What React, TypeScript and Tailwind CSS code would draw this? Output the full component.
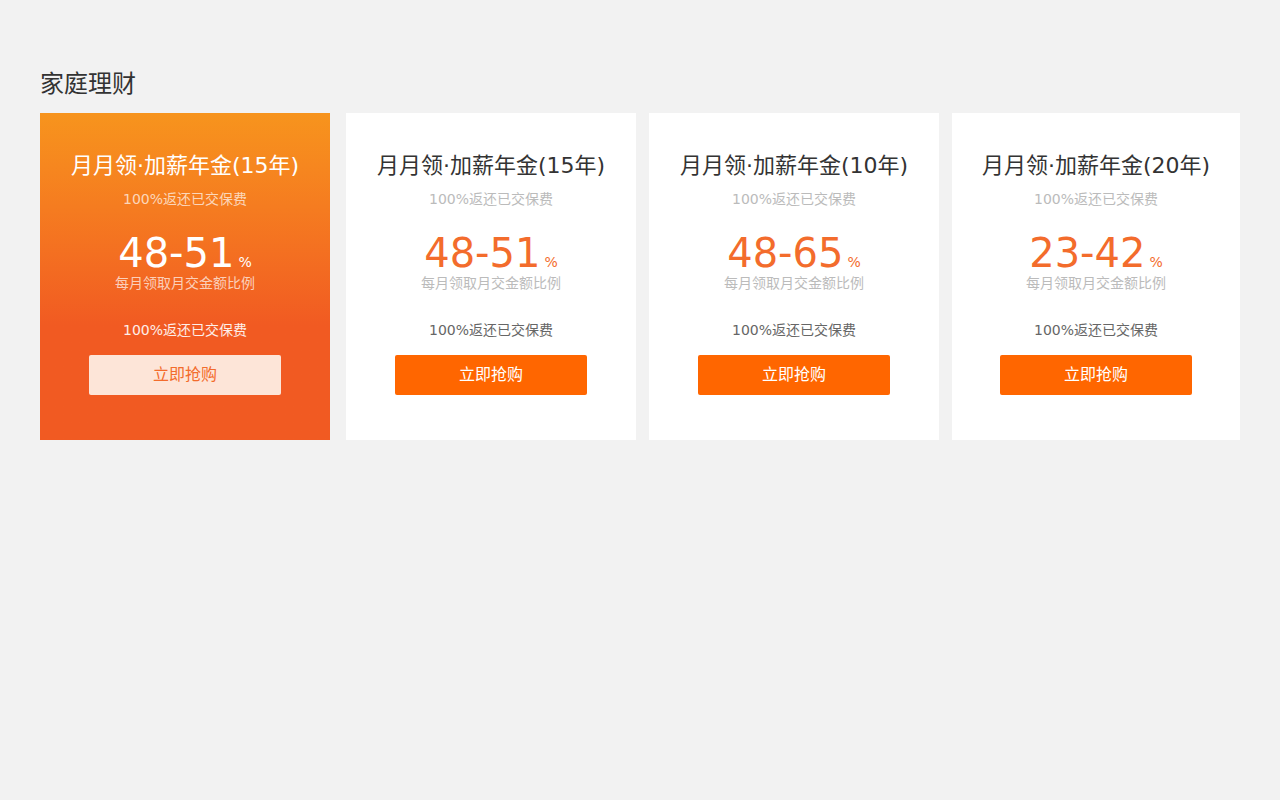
const products = [
  { id: "1", name: "月月领·加薪年金(15年)", range: "48-51", active: true },
  { id: "2", name: "月月领·加薪年金(15年)", range: "48-51", active: false },
  { id: "3", name: "月月领·加薪年金(10年)", range: "48-65", active: false },
  { id: "4", name: "月月领·加薪年金(20年)", range: "23-42", active: false },
];

function ProductCard({ name, range, active, last }: { name: string; range: string; active: boolean; last: boolean }) {
  const size = last ? "w-[288px] h-[327px]" : "w-[290px] h-[327px]";
  return (
    <div
      className={
        active
          ? `${size} flex flex-col items-center bg-linear-to-b from-[#f7941d] via-[#f15a22] via-65% to-[#f15a22] text-white`
          : `${size} flex flex-col items-center bg-white`
      }
    >
      <h3 className={active ? "mt-[38px] text-[22px] leading-[30px] text-white" : "mt-[38px] text-[22px] leading-[30px] text-[#333]"}>
        {name}
      </h3>
      <p className={active ? "mt-[8px] text-[14px] leading-[20px] text-white/70" : "mt-[8px] text-[14px] leading-[20px] text-[#bbb]"}>
        100%返还已交保费
      </p>
      <div className="mt-[22px] flex items-baseline h-[44px]">
        <span className={active ? "text-[40px] leading-[44px] text-white" : "text-[40px] leading-[44px] text-[#f36c2c]"}>{range}</span>
        <span className={active ? "ml-[4px] text-[14px] text-white" : "ml-[4px] text-[14px] text-[#f36c2c]"}>%</span>
      </div>
      <p className={active ? "mt-[-2px] text-[14px] leading-[20px] text-white/70" : "mt-[-2px] text-[14px] leading-[20px] text-[#bbb]"}>
        每月领取月交金额比例
      </p>
      <p className={active ? "mt-[27px] text-[14px] leading-[20px] text-white/90" : "mt-[27px] text-[14px] leading-[20px] text-[#666]"}>
        100%返还已交保费
      </p>
      <button
        className={
          active
            ? "mt-[15px] w-[192px] h-[40px] rounded-[2px] bg-[#fde5d8] text-[#f36c2c] text-[16px]"
            : "mt-[15px] w-[192px] h-[40px] rounded-[2px] bg-[#ff6600] text-white text-[16px]"
        }
      >
        立即抢购
      </button>
    </div>
  );
}

export default function App() {
  return (
    <div className="min-h-screen bg-[#f2f2f2] px-[40px] pt-[68px] font-['DejaVu_Sans','Noto_Sans_CJK_SC',sans-serif]">
      <h2 className="text-[24px] leading-[32px] text-[#333]">家庭理财</h2>
      <div className="mt-[13px] flex">
        {products.map((p, idx) => (
          <div key={p.id} className={idx === 0 ? "" : idx === 1 ? "ml-[16px]" : "ml-[13px]"}>
            <ProductCard name={p.name} range={p.range} active={p.active} last={idx === products.length - 1} />
          </div>
        ))}
      </div>
    </div>
  );
}
